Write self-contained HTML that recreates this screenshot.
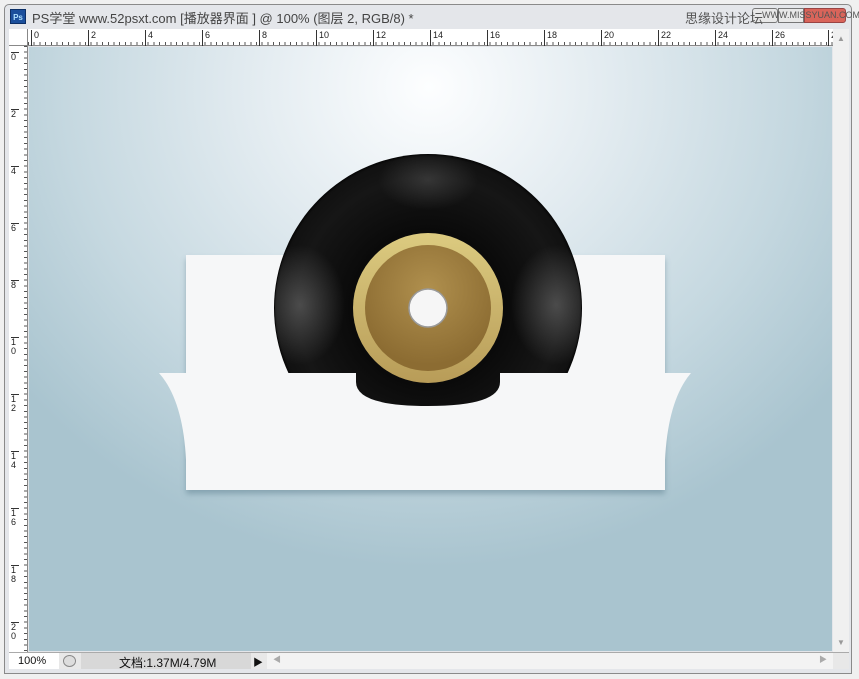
<!DOCTYPE html>
<html><head><meta charset="utf-8"><style>
*{margin:0;padding:0;box-sizing:border-box}
body{width:859px;height:679px;background:#f0f0f0;position:relative;overflow:hidden;font-family:"Liberation Sans","Noto Sans CJK SC",sans-serif}
.abs{position:absolute}
#frame{left:4px;top:4px;width:848px;height:670px;border:1px solid #8a8a8a;border-radius:5px 5px 0 0;background:#e4e6ea}
#title{left:10px;top:8px;font-size:13px;color:#444;white-space:nowrap}
#ps{left:10px;top:9px;width:16px;height:15px;background:#1b4f9c;color:#aee0ff;font-size:8px;font-weight:bold;text-align:center;line-height:15px;border:1px solid #0c2f66}
#rtop{left:28px;top:29px;width:805px;height:17px;background:#fff;border-bottom:1px solid #888;
 background-image:repeating-linear-gradient(90deg,#555 0 1px,transparent 1px 5.7px);background-size:100% 3px;background-repeat:no-repeat;background-position:0 13px}
#rleft{left:9px;top:46px;width:19px;height:606px;background:#fff;border-right:1px solid #888;
 background-image:repeating-linear-gradient(180deg,#555 0 1px,transparent 1px 5.7px);background-size:3px 100%;background-repeat:no-repeat;background-position:15px 0}
.tn{position:absolute;font-size:9px;color:#222;top:1px;border-left:1px solid #333;padding-left:2px;height:16px}
.ln{position:absolute;font-size:9px;color:#222;left:2px;line-height:9px;width:8px;border-top:1px solid #333}
#canvas{left:29px;top:47px;width:803px;height:604px;background:radial-gradient(ellipse 520px 480px at 400px 40px,#fdfeff 0%,#e2ebf0 35%,#c5d8e0 70%,#a9c4cf 100%)}
#vs{left:833px;top:29px;width:16px;height:623px;background:#f0f0f0}
#status{left:9px;top:652px;width:840px;height:17px;background:#e8e8e8;border-top:1px solid #aaa;font-size:11px;color:#111}
</style></head><body>
<div id="frame" class="abs"></div>
<div id="ps" class="abs">Ps</div>
<div id="title" class="abs" style="left:32px">PS学堂 www.52psxt.com [播放器界面 ] @ 100% (图层 2, RGB/8) *</div>
<div class="abs" style="left:752px;top:8px;width:26px;height:15px;border:1px solid #777;border-radius:3px;background:#e8e8e8"></div>
<div class="abs" style="left:778px;top:8px;width:26px;height:15px;border:1px solid #777;background:#e8e8e8"></div>
<div class="abs" style="left:804px;top:8px;width:42px;height:15px;border:1px solid #944;border-radius:0 3px 3px 0;background:#d9645a"></div>
<div class="abs" style="left:685px;top:8px;font-size:13px;color:#555">思缘设计论坛</div>
<div class="abs" style="left:762px;top:10px;font-size:9px;color:#555">WWW.MISSYUAN.COM</div>
<div id="rtop" class="abs">
<div class="tn" style="left:3px">0</div><div class="tn" style="left:60px">2</div><div class="tn" style="left:117px">4</div><div class="tn" style="left:174px">6</div><div class="tn" style="left:231px">8</div><div class="tn" style="left:288px">10</div><div class="tn" style="left:345px">12</div><div class="tn" style="left:402px">14</div><div class="tn" style="left:459px">16</div><div class="tn" style="left:516px">18</div><div class="tn" style="left:573px">20</div><div class="tn" style="left:630px">22</div><div class="tn" style="left:687px">24</div><div class="tn" style="left:744px">26</div><div class="tn" style="left:800px">28</div>
</div>
<div class="abs" style="left:9px;top:29px;width:19px;height:17px;background:#fff;border-right:1px solid #888;border-bottom:1px solid #888"></div>
<div id="rleft" class="abs">
<div class="ln" style="top:6px">0</div><div class="ln" style="top:63px">2</div><div class="ln" style="top:120px">4</div><div class="ln" style="top:177px">6</div><div class="ln" style="top:234px">8</div><div class="ln" style="top:291px">1<br>0</div><div class="ln" style="top:348px">1<br>2</div><div class="ln" style="top:405px">1<br>4</div><div class="ln" style="top:462px">1<br>6</div><div class="ln" style="top:519px">1<br>8</div><div class="ln" style="top:576px">2<br>0</div>
</div>
<div id="canvas" class="abs"></div>
<svg class="abs" style="left:0;top:0" width="859" height="679">
<defs>
<radialGradient id="vinyl" cx="428" cy="308" r="154" gradientUnits="userSpaceOnUse">
<stop offset="0.5" stop-color="#0a0a0a"/><stop offset="0.85" stop-color="#161616"/><stop offset="0.98" stop-color="#111"/><stop offset="1" stop-color="#050505"/></radialGradient>
<radialGradient id="gold" cx="428" cy="290" r="75" gradientUnits="userSpaceOnUse"><stop offset="0" stop-color="#b0904e"/><stop offset="1" stop-color="#8c6c32"/></radialGradient>
<linearGradient id="ring" x1="0" y1="0" x2="0" y2="1"><stop offset="0" stop-color="#dccb80"/><stop offset="1" stop-color="#b89c58"/></linearGradient>
<radialGradient id="hl" cx="0.5" cy="0.5" r="0.5"><stop offset="0" stop-color="#777" stop-opacity="0.55"/><stop offset="1" stop-color="#777" stop-opacity="0"/></radialGradient>
<clipPath id="rc"><path d="M200 140H660V373H500V382Q500 406 428 406Q356 406 356 382V373H200Z"/></clipPath>
<clipPath id="cc"><circle cx="428" cy="308" r="153"/></clipPath>
<filter id="sh" x="-10%" y="-10%" width="120%" height="130%"><feDropShadow dx="0" dy="4" stdDeviation="3" flood-color="#557788" flood-opacity="0.45"/></filter>
</defs>
<rect x="186" y="255" width="479" height="235" fill="#f6f7f8" filter="url(#sh)"/>
<path d="M159 373H691Q668 400 665 460V490H186V460Q183 400 159 373Z" fill="#f6f7f8"/>
<g clip-path="url(#rc)">
<circle cx="428" cy="308" r="154" fill="url(#vinyl)"/>
<g clip-path="url(#cc)">
<ellipse cx="300" cy="305" rx="45" ry="60" fill="url(#hl)"/>
<ellipse cx="556" cy="305" rx="45" ry="60" fill="url(#hl)"/>
<ellipse cx="428" cy="180" rx="50" ry="30" fill="url(#hl)" opacity="0.6"/>
</g>
<circle cx="428" cy="308" r="75" fill="url(#ring)"/>
<circle cx="428" cy="308" r="63" fill="url(#gold)"/>
<circle cx="428" cy="308" r="19" fill="#f6f6f6" stroke="#9a9a9a" stroke-width="1.5"/>
</g>
</svg>
<div id="vs" class="abs"><div style="position:absolute;top:5px;left:4px;font-size:8px;color:#999">▲</div><div style="position:absolute;top:609px;left:4px;font-size:8px;color:#999">▼</div></div>
<div id="status" class="abs">
<div class="abs" style="left:0;top:0;width:50px;height:16px;background:#fff;padding:2px 0 0 9px">100%</div>
<div class="abs" style="left:54px;top:2px;width:13px;height:12px;border:1px solid #888;border-radius:50%;background:#ddd"></div>
<div class="abs" style="left:72px;top:0;width:170px;height:16px;background:#d8d8d8;padding:1px 0 0 38px;font-size:12px">文档:1.37M/4.79M</div>
<div class="abs" style="left:244px;top:1px;font-size:10px">▶</div>
<div class="abs" style="left:258px;top:0;width:566px;height:16px;background:#f3f3f3"><span style="position:absolute;left:6px;top:1px;font-size:8px;color:#aaa">◀</span><span style="position:absolute;right:6px;top:1px;font-size:8px;color:#aaa">▶</span></div>
</div>
</body></html>
